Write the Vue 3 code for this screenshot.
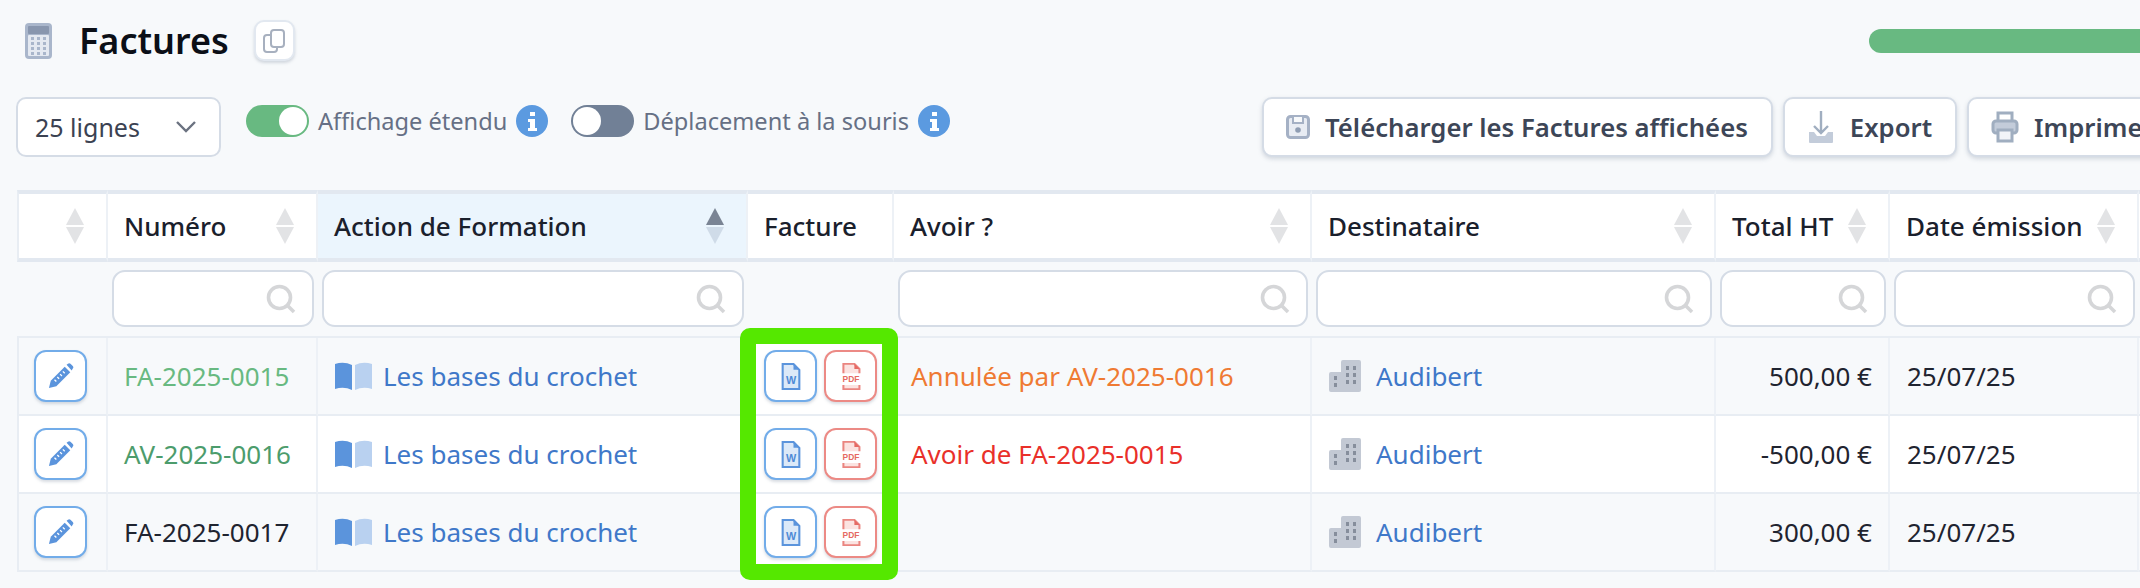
<template>
  <div class="page">
    <div class="title-row">
      <svg class="calc-icon" viewBox="0 0 27 36" width="27" height="36">
        <rect width="27" height="36" rx="4" fill="#a9b6cb" />
        <rect x="3" y="3" width="21" height="8" rx="1" fill="#8896ae" />
        <rect x="3" y="12" width="21" height="21" rx="1" fill="#e4e9f1" />
        <g fill="#a9b6cb">
          <rect v-for="d in calcDots" :key="d.k" :x="d.x" :y="d.y" width="3" height="3" />
        </g>
      </svg>
      <h1 class="title">Factures</h1>
      <button class="copy-btn">
        <svg viewBox="0 0 24 26" width="24" height="26" fill="none" stroke="#a7b0bf" stroke-width="2">
          <rect x="9" y="2" width="13" height="17" rx="3" />
          <path d="M9 7H5a3 3 0 0 0-3 3v11a3 3 0 0 0 3 3h7a3 3 0 0 0 3-3v-2" />
        </svg>
      </button>
      <div class="progress"></div>
    </div>

    <div class="toolbar">
      <div class="select">
        <span>25 lignes</span>
        <svg viewBox="0 0 22 14" width="22" height="14" fill="none" stroke="#6b7280" stroke-width="2.4">
          <path d="M2 2l9 9 9-9" />
        </svg>
      </div>
      <div class="switch-group">
        <span class="toggle on"><i></i></span>
        <span class="switch-label">Affichage étendu</span>
        <svg class="info" viewBox="0 0 32 32" width="32" height="32">
          <circle cx="16" cy="16" r="16" fill="#5b9ae0" />
          <rect x="14" y="7" width="5" height="4" fill="#fff" />
          <path d="M12 14h7v9h2v3H12v-3h2v-6h-2z" fill="#fff" />
        </svg>
      </div>
      <div class="switch-group second">
        <span class="toggle off"><i></i></span>
        <span class="switch-label">Déplacement à la souris</span>
        <svg class="info" viewBox="0 0 32 32" width="32" height="32">
          <circle cx="16" cy="16" r="16" fill="#5b9ae0" />
          <rect x="14" y="7" width="5" height="4" fill="#fff" />
          <path d="M12 14h7v9h2v3H12v-3h2v-6h-2z" fill="#fff" />
        </svg>
      </div>
      <div class="actions">
        <button class="action">
          <svg viewBox="0 0 24 24" width="24" height="24">
            <rect x="1.500" y="1.500" width="21" height="21" rx="3" fill="#e8ecf3" stroke="#a5b1c5" stroke-width="3" />
            <path d="M7 2v6h10V2" fill="#f7f9fb" stroke="#a5b1c5" stroke-width="2" />
            <circle cx="12" cy="15" r="2.800" fill="#8f9db3" />
          </svg>
          Télécharger les Factures affichées
        </button>
        <button class="action">
          <svg viewBox="0 0 28 34" width="28" height="34">
            <path d="M2 22h5l3 4h8l3-4h5v10a1 1 0 0 1-1 1H3a1 1 0 0 1-1-1z" fill="#c3ccda" />
            <path d="M14 1v22M7 16l7 7 7-7" fill="none" stroke="#a0aec0" stroke-width="2.4" />
          </svg>
          Export
        </button>
        <button class="action">
          <svg viewBox="0 0 28 34" width="28" height="34" fill="none" stroke="#a0aec0" stroke-width="3">
            <path d="M7 11V3h14v8" />
            <rect x="2" y="11" width="24" height="12" rx="3" fill="#c3ccda" />
            <path d="M7 20h14v11H7z" fill="#f2f4f8" />
          </svg>
          Imprimer
        </button>
      </div>
    </div>

    <table class="grid">
      <colgroup>
        <col v-for="w in colWidths" :key="w" :style="{ width: w + 'px' }" />
      </colgroup>
      <thead>
        <tr class="head">
          <th v-for="c in columns" :key="c.key" :class="{ active: c.active }">
            <div class="th-inner">
              <span>{{ c.label }}</span>
              <svg v-if="c.sort" class="sort" viewBox="0 0 18 36" width="18" height="36">
                <path d="M9 0l9 17H0z" :fill="c.active ? '#7a8494' : '#e2e3e5'" />
                <path d="M0 19h18L9 36z" :fill="c.active ? '#cfdbe8' : '#e2e3e5'" />
              </svg>
            </div>
          </th>
        </tr>
        <tr class="filters">
          <td v-for="c in columns" :key="c.key">
            <div v-if="c.filter" class="filter">
              <svg viewBox="0 0 30 30" width="30" height="30" fill="none" stroke="#d5d6d8" stroke-width="3.6">
                <circle cx="13.5" cy="13.5" r="11" />
                <path d="M21 21l7 7" />
              </svg>
            </div>
          </td>
        </tr>
      </thead>
      <tbody>
        <tr v-for="r in rows" :key="r.num" class="row">
          <td>
            <button class="icon-btn blue">
              <svg viewBox="0 0 28 28" width="26" height="26">
                <path d="M1 27l2-8L18 4l6 6L9 25z" fill="#5b94dc" />
                <path d="M6 17l2 2M9 14l2 2M12 11l2 2M15 8l2 2" stroke="#fff" stroke-width="1.4" transform="translate(1 1)" />
                <path d="M20 2l1.500-1.200a2 2 0 0 1 2.700 0l2.500 2.500a2 2 0 0 1 0 2.700L25.500 8z" fill="#5b94dc" />
              </svg>
            </button>
          </td>
          <td class="pad num" :class="r.numClass">{{ r.num }}</td>
          <td class="pad">
            <a class="link">
              <svg class="book" viewBox="0 0 37 28" width="37" height="28">
                <path d="M0 2q9-3 17 1v25q-8-4-17-1z" fill="#5b94dc" />
                <path d="M20 3q8-4 17-1v25q-9-3-17 1z" fill="#b9d1f0" />
              </svg>
              Les bases du crochet
            </a>
          </td>
          <td class="docs">
            <div class="doc-btns">
              <button class="icon-btn blue">
                <svg viewBox="0 0 24 32" width="20" height="27">
                  <path d="M2 1h13l7 7v23H2z" fill="#dce9f8" stroke="#5b94dc" stroke-width="2.500" />
                  <path d="M15 1l7 7h-7z" fill="#5b94dc" />
                  <text x="12" y="25" text-anchor="middle" class="mini blue-t">W</text>
                </svg>
              </button>
              <button class="icon-btn red">
                <svg viewBox="0 0 28 32" width="24" height="27">
                  <path d="M5 12V1h13l6 6v5M5 26v5h19v-5" fill="#fbe3e1" stroke="#ea8580" stroke-width="2.400" />
                  <path d="M18 1l6 6h-6z" fill="#e56a64" />
                  <text x="14" y="23" text-anchor="middle" class="mini red-t">PDF</text>
                </svg>
              </button>
            </div>
          </td>
          <td class="pad" :class="r.avoirClass">{{ r.avoir }}</td>
          <td class="pad">
            <a class="link wide">
              <svg class="building" viewBox="0 0 32 32" width="32" height="32">
                <path d="M12 2q0-2 2-2h16q2 0 2 2v28q0 2-2 2H2q-2 0-2-2V14q0-2 2-2h10z" fill="#c3c9d4" />
                <g fill="#868e9c">
                  <rect v-for="w in buildingWindows" :key="w.k" :x="w.x" :y="w.y" width="3" height="4" />
                </g>
              </svg>
              Audibert
            </a>
          </td>
          <td class="pad amount">{{ r.total }}</td>
          <td class="pad">25/07/25</td>
          <td></td>
        </tr>
      </tbody>
    </table>

    <div class="highlight"></div>
  </div>
</template>

<script setup>
const colWidths = [91, 210, 430, 146, 418, 404, 174, 249, 3]

const columns = [
  { key: 'edit', label: '', sort: true },
  { key: 'num', label: 'Numéro', sort: true, filter: true },
  { key: 'action', label: 'Action de Formation', sort: true, filter: true, active: true },
  { key: 'facture', label: 'Facture' },
  { key: 'avoir', label: 'Avoir ?', sort: true, filter: true },
  { key: 'dest', label: 'Destinataire', sort: true, filter: true },
  { key: 'total', label: 'Total HT', sort: true, filter: true },
  { key: 'date', label: 'Date émission', sort: true, filter: true },
  { key: 'more', label: '' },
]

const rows = [
  { num: 'FA-2025-0015', numClass: 'green-light', avoir: 'Annulée par AV-2025-0016', avoirClass: 'orange', total: '500,00 €' },
  { num: 'AV-2025-0016', numClass: 'green-dark', avoir: 'Avoir de FA-2025-0015', avoirClass: 'red-text', total: '-500,00 €' },
  { num: 'FA-2025-0017', numClass: '', avoir: '', avoirClass: '', total: '300,00 €' },
]

const calcDots = []
for (let i = 0; i < 3; i++) {
  for (let j = 0; j < 4; j++) {
    calcDots.push({ k: i + '-' + j, x: 6 + i * 6, y: 14 + j * 5 })
  }
}

const buildingWindows = []
for (let i = 0; i < 2; i++) {
  for (let j = 0; j < 3; j++) {
    buildingWindows.push({ k: i + '-' + j, x: 17 + i * 7, y: 6 + j * 7 })
  }
}
buildingWindows.push({ k: 'l1', x: 5, y: 16 }, { k: 'l2', x: 5, y: 23 })
</script>

<style>
html,
body {
  margin: 0;
  background: #f7f9fb;
}
</style>

<style scoped>
.page {
  position: relative;
  width: 2140px;
  height: 588px;
  overflow: hidden;
  box-sizing: border-box;
  padding: 20px 0 0 17px;
  background: #f7f9fb;
  font-family: "Noto Sans", "Open Sans", sans-serif;
  font-size: 26px;
  color: #1f2430;
}

.title-row {
  display: flex;
  align-items: center;
  height: 41px;
}

.calc-icon {
  flex: none;
  margin-left: 8px;
}

.title {
  flex: none;
  margin: 0 0 0 27px;
  font-size: 36px;
  font-weight: 600;
  color: #0b0f17;
}

.copy-btn {
  display: flex;
  flex: none;
  align-items: center;
  justify-content: center;
  width: 41px;
  height: 41px;
  margin-left: 25px;
  padding: 0;
  background: #fff;
  border: 2px solid #e2e8f0;
  border-radius: 10px;
  box-shadow: 0 2px 3px rgba(100, 116, 139, 0.25);
}

.progress {
  flex: none;
  width: 271px;
  height: 24px;
  margin-left: auto;
  background: #68b981;
  border-radius: 12px 0 0 12px;
}

.toolbar {
  display: flex;
  align-items: flex-start;
  height: 60px;
  margin-top: 36px;
  white-space: nowrap;
}

.select {
  display: flex;
  flex: none;
  align-items: center;
  justify-content: space-between;
  box-sizing: border-box;
  width: 205px;
  height: 60px;
  margin-left: -1px;
  padding: 0 22px 0 17px;
  background: #fff;
  border: 2px solid #d5dce6;
  border-radius: 10px;
  font-size: 25px;
  color: #3b4252;
}

.switch-group {
  display: flex;
  flex: none;
  align-items: center;
  height: 32px;
  margin: 8px 0 0 25px;
  font-size: 23.6px;
  color: #667085;
}

.switch-group.second {
  margin-left: 23px;
}

.switch-label {
  margin: 0 9px;
}

.toggle {
  display: block;
  box-sizing: border-box;
  width: 63px;
  height: 32px;
  padding: 2px;
  border-radius: 16px;
}

.toggle i {
  display: block;
  width: 28px;
  height: 28px;
  background: #fff;
  border-radius: 50%;
}

.toggle.on {
  background: #68b981;
}

.toggle.on i {
  margin-left: 31px;
}

.toggle.off {
  background: #718096;
}

.actions {
  display: flex;
  flex: none;
  gap: 10px;
  margin-left: 312px;
}

.action {
  display: flex;
  flex: none;
  align-items: center;
  gap: 15px;
  box-sizing: border-box;
  height: 60px;
  padding: 0 23px 0 22px;
  background: #fff;
  border: 2px solid #d5dce6;
  border-radius: 10px;
  box-shadow: 0 2px 4px rgba(100, 116, 139, 0.25);
  font-family: inherit;
  font-size: 25.7px;
  font-weight: 600;
  color: #3d4657;
}

.grid {
  width: 2125px;
  margin-top: 33px;
  table-layout: fixed;
  border-collapse: separate;
  border-spacing: 0;
}

.head th {
  box-sizing: border-box;
  height: 72px;
  padding: 0 22px 0 16px;
  background: #fff;
  border-top: 4px solid #e2e8f0;
  border-bottom: 4px solid #e2e8f0;
  border-right: 2px solid #edf1f6;
  text-align: left;
  font-weight: 500;
  color: #1a202c;
  white-space: nowrap;
}

.head th:first-child,
.row td:first-child {
  border-left: 2px solid #e8edf3;
}

.head th.active {
  background: #ebf5fd;
}

.th-inner {
  display: flex;
  align-items: center;
  justify-content: space-between;
}

.sort {
  flex: none;
}

.filters td {
  box-sizing: border-box;
  height: 76px;
  padding: 8px 4px 9px;
  border-bottom: 2px solid #e8edf3;
}

.filter {
  display: flex;
  align-items: center;
  justify-content: flex-end;
  box-sizing: border-box;
  height: 57px;
  padding-right: 16px;
  background: #fff;
  border: 2px solid #d5dce6;
  border-radius: 13px;
}

.row td {
  box-sizing: border-box;
  height: 78px;
  padding: 0;
  border-bottom: 2px solid #e8edf3;
  border-right: 2px solid #edf1f6;
  white-space: nowrap;
}

.row td:first-child {
  padding-left: 15px;
}

.row:nth-child(even) td {
  background: #fff;
}

.row td.pad {
  padding: 0 16px 0 17px;
}

.row td.num {
  padding-left: 16px;
}

.row td.amount {
  text-align: right;
}

.row td.docs {
  padding-left: 16px;
  background: #fff;
}

.doc-btns {
  display: flex;
  gap: 7px;
}

.icon-btn {
  display: flex;
  align-items: center;
  justify-content: center;
  box-sizing: border-box;
  width: 53px;
  height: 52px;
  padding: 0;
  background: #fff;
  border-radius: 12px;
  box-shadow: 0 2px 3px rgba(100, 116, 139, 0.25);
}

.icon-btn.blue {
  border: 2px solid #72ace9;
}

.icon-btn.red {
  border: 2px solid #ec8a85;
}

.mini {
  font-family: "Liberation Sans", sans-serif;
  font-weight: 700;
}

.blue-t {
  font-size: 13px;
  fill: #4f8bd6;
}

.red-t {
  font-size: 10px;
  fill: #e56a64;
}

.link {
  display: flex;
  align-items: center;
  gap: 11px;
  color: #3f78c9;
}

.link.wide {
  gap: 15px;
}

.green-light {
  color: #68b981;
}

.green-dark {
  color: #4c9c6c;
}

.orange {
  color: #ef7a33;
}

.red-text {
  color: #e9302a;
}

.highlight {
  position: absolute;
  left: 740px;
  top: 328px;
  box-sizing: border-box;
  width: 158px;
  height: 252px;
  border: 16px solid #55e800;
  border-radius: 10px;
  pointer-events: none;
}
</style>
